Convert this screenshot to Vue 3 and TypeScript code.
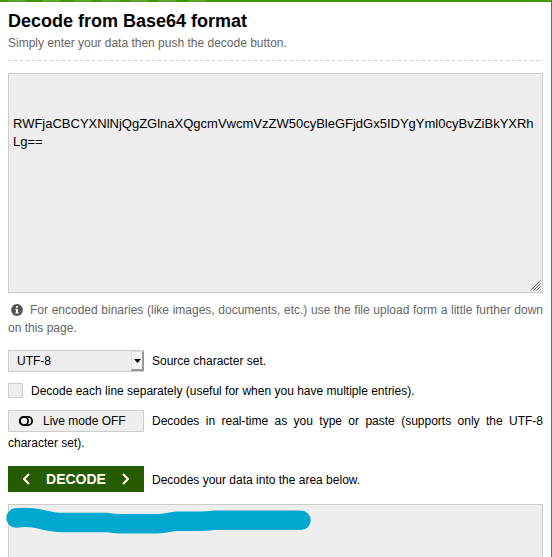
<script setup lang="ts">
import { ref } from 'vue'

const source = ref('\n\nRWFjaCBCYXNlNjQgZGlnaXQgcmVwcmVzZW50cyBleGFjdGx5IDYgYml0cyBvZiBkYXRhLg==')
const stripes: number[] = [7, 42, 73, 101, 129, 158, 188]
const live = ref(false)
const separate = ref(false)
</script>

<template>
  <main class="page">
    <svg class="strip" viewBox="0 0 552 2">
      <path v-for="x in stripes" :key="x" :d="`M${x + 1} 0h18l-1 2h-18z`" />
    </svg>
    <h1>Decode from Base64 format</h1>
    <p class="intro">Simply enter your data then push the decode button.</p>
    <div class="rule"></div>
    <div class="input">
      <textarea v-model="source" spellcheck="false"></textarea>
      <svg class="grip" width="11" height="11" viewBox="0 0 11 11">
        <path d="M0.5 10.5l10-10M3.5 10.5l7-7M6.5 10.5l4-4M9.5 10.5l1-1" />
      </svg>
    </div>
    <p class="note">
      <svg class="info" width="12" height="12" viewBox="0 0 12 12">
        <circle cx="6" cy="6" r="5.9" fill="#555" />
        <path d="M5 2h2v1.7H5zM4.3 5H7v3.4h.8v1.1H4.3V8.4H5V6h-.7z" fill="#fff" />
      </svg>For encoded binaries (like images, documents, etc.) use the file upload form a little further down on this page.
    </p>
    <div class="row charset">
      <div class="select">
        <span>UTF-8</span>
        <span class="arrow"><svg width="7" height="4" viewBox="0 0 7 4"><path d="M0 0h7L3.5 4z" /></svg></span>
      </div>
      <span>Source character set.</span>
    </div>
    <label class="row lines">
      <input v-model="separate" type="checkbox" />
      <span>Decode each line separately (useful for when you have multiple entries).</span>
    </label>
    <p class="live">
      <button class="toggle" type="button" @click="live = !live">
        <svg width="14" height="10" viewBox="0 0 14 10">
          <rect x=".9" y=".9" width="12.2" height="8.2" rx="4.1" />
          <ellipse cx="5" cy="5" rx="4.1" ry="4.1" />
        </svg>
        <span>Live mode {{ live ? 'ON' : 'OFF' }}</span>
      </button>Decodes in real-time as you type or paste (supports only the UTF-8 character set).
    </p>
    <div class="row action">
      <button class="decode" type="button">
        <svg width="8" height="12" viewBox="0 0 8 12"><path d="M7 1L2 6l5 5" /></svg>
        <span>DECODE</span>
        <svg width="8" height="12" viewBox="0 0 8 12"><path d="M1 1l5 5-5 5" /></svg>
      </button>
      <span class="hint">Decodes your data into the area below.</span>
    </div>
    <div class="output">
      <svg class="marker" width="306" height="28" viewBox="0 0 306 28">
        <path d="M10 11C14 10.5 22 10 28 11C38 12.5 45 15.5 56 15.5H101Q108 16.5 114 16.8H151C159 16.8 164 14.6 171 14.3H194Q201 14 207 13.3H295" />
      </svg>
    </div>
  </main>
</template>

<style>
body {
  background: #fff;
  overflow: hidden;
}
</style>

<style scoped>
.page {
  box-sizing: border-box;
  height: 557px;
  overflow: hidden;
  padding: 0 8px;
  border-right: 1px solid #409800;
  font: 12px/18px "Liberation Sans", Arial, sans-serif;
  color: #000;
}
.strip {
  display: block;
  width: 552px;
  height: 2px;
  margin: 0 -8px;
  background: #409800;
  fill: #5ca52a;
}
h1, p {
  margin: 0;
}
h1 {
  padding-top: 7px;
  font-size: 18px;
  line-height: 24px;
}
.intro {
  padding-top: 1px;
  color: #666;
}
.rule {
  height: 1px;
  margin-top: 8px;
  background: repeating-linear-gradient(90deg, #ccc 0 3px, transparent 3px 6px);
}
.input {
  position: relative;
  height: 220px;
  margin-top: 12px;
}
textarea {
  display: block;
  box-sizing: border-box;
  width: 100%;
  height: 100%;
  padding: 5px 4px;
  border: 1px solid #ccc;
  border-radius: 0;
  outline: 0;
  resize: none;
  overflow: hidden;
  background: #eee;
  color: #000;
  font: 13px/18px "Liberation Sans", Arial, sans-serif;
  word-break: break-all;
}
.grip {
  position: absolute;
  right: 2px;
  bottom: 2px;
  fill: none;
  stroke: #666;
}
.note {
  margin-top: 8px;
  color: #666;
  text-align: justify;
}
.info {
  margin: 0 7px 0 3px;
  vertical-align: -2px;
}
.row {
  display: flex;
  align-items: center;
}
.charset {
  gap: 8px;
  margin-top: 13px;
}
.select {
  box-sizing: border-box;
  display: flex;
  align-items: center;
  justify-content: space-between;
  width: 136px;
  height: 22px;
  padding-left: 8px;
  border: 1px solid #ccc;
  background: #eee;
}
.arrow {
  box-sizing: border-box;
  display: flex;
  align-items: center;
  justify-content: center;
  width: 13px;
  height: 20px;
  margin-right: -1px;
  border: solid;
  border-width: 1px 2px 2px 1px;
  border-color: #ddd #999 #999 #ddd;
  background: #f5f5f5;
}
.lines {
  gap: 8px;
  margin-top: 10px;
}
.lines input {
  appearance: none;
  width: 15px;
  height: 15px;
  box-sizing: border-box;
  margin: 0 0 1px;
  border: 1px solid #ccc;
  background: #eee;
}
.live {
  margin-top: 10px;
  line-height: 22px;
  text-align: justify;
}
.toggle {
  box-sizing: border-box;
  display: inline-flex;
  align-items: center;
  gap: 10px;
  width: 136px;
  height: 22px;
  margin-right: 8px;
  padding: 0 10px;
  border: 1px solid #ccc;
  background: #eee;
  color: #000;
  font: inherit;
  line-height: 20px;
  vertical-align: -1px;
}
.toggle svg {
  fill: none;
  stroke: #000;
  stroke-width: 1.8;
}
.action {
  gap: 8px;
  margin-top: 12px;
}
.hint {
  padding-top: 2px;
}
.decode {
  display: flex;
  align-items: center;
  justify-content: space-between;
  width: 136px;
  height: 26px;
  padding: 0 14px;
  border: 0;
  background: #265b00;
  color: #fff;
  font: bold 14px/26px "Liberation Sans", Arial, sans-serif;
}
.decode svg {
  fill: none;
  stroke: #fff;
  stroke-width: 2;
}
.output {
  position: relative;
  height: 80px;
  margin-top: 12px;
  border: 1px solid #ccc;
  background: #eee;
}
.marker {
  position: absolute;
  left: -3px;
  top: 2px;
  fill: none;
  stroke: #00a8d0;
  stroke-width: 19.4;
  stroke-linecap: round;
  stroke-linejoin: round;
  overflow: visible;
}
</style>
